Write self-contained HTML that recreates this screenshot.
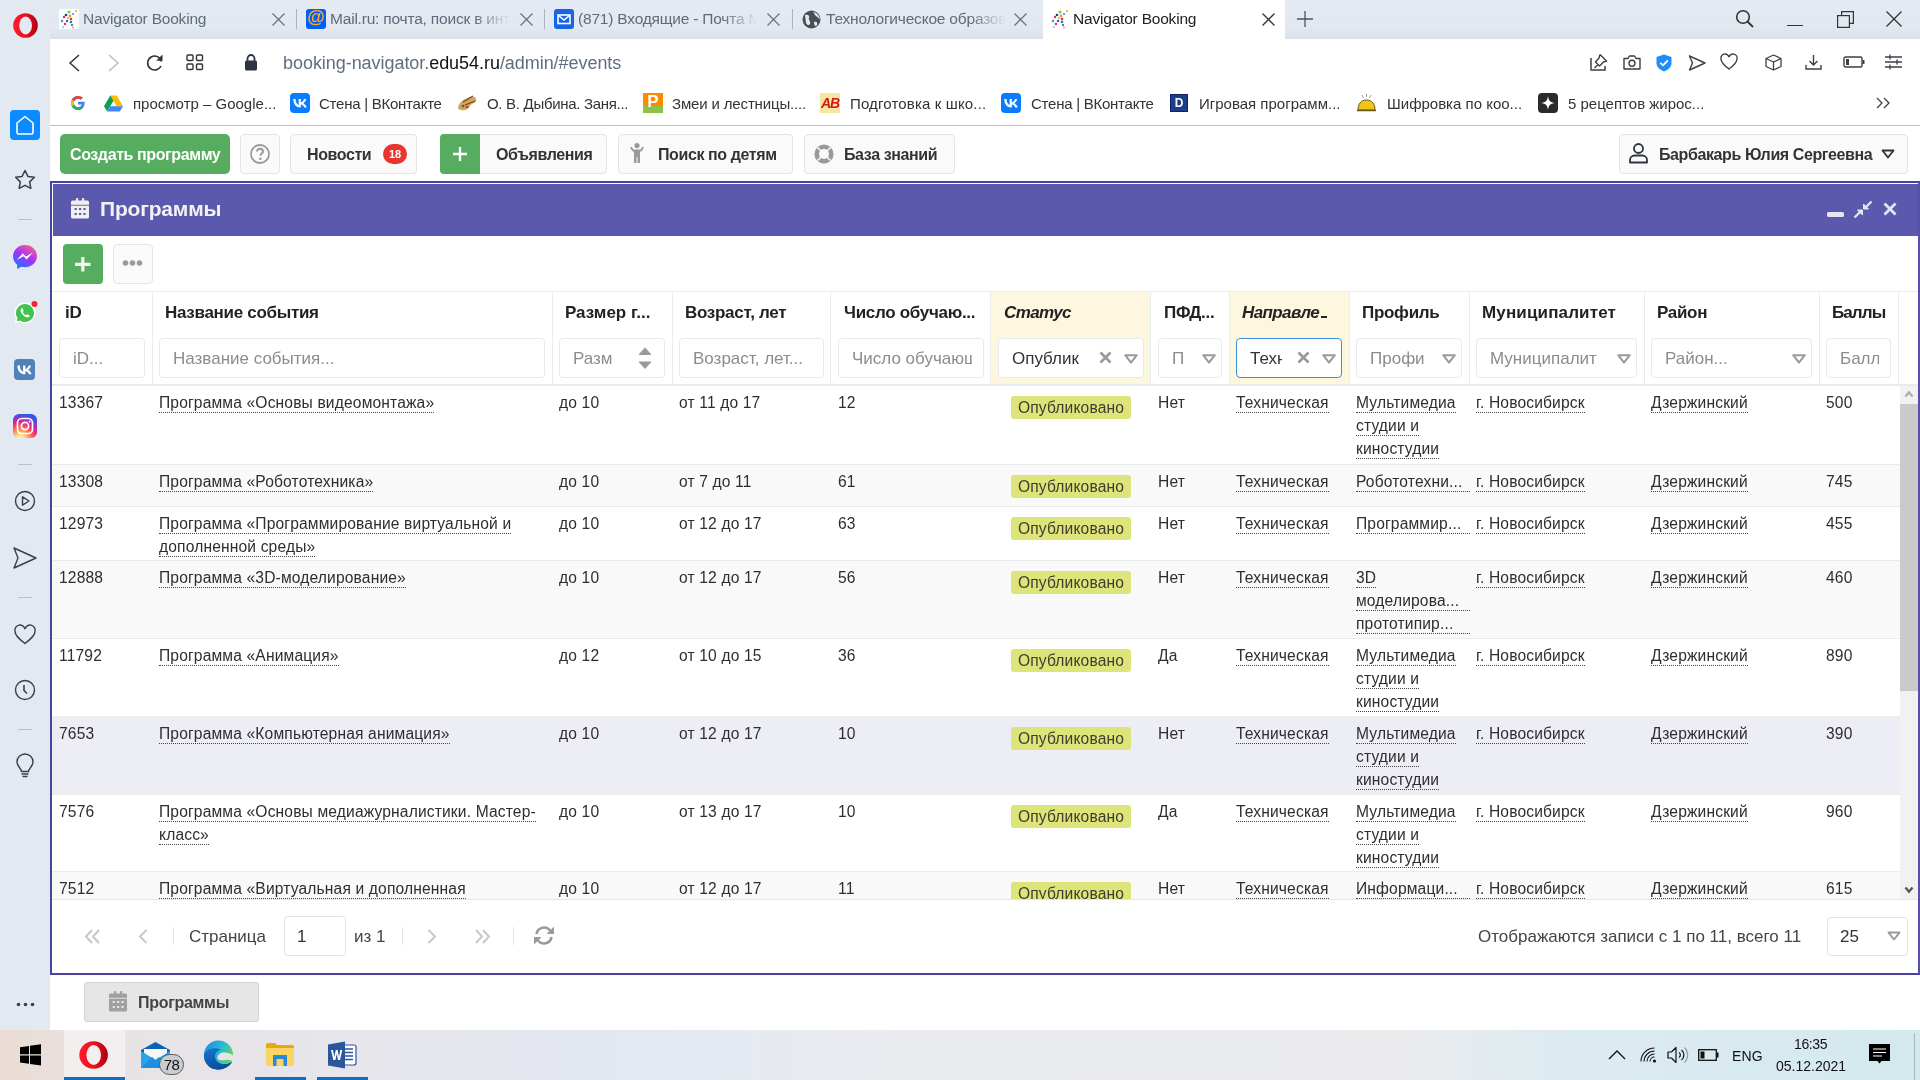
<!DOCTYPE html>
<html><head><meta charset="utf-8">
<style>
*{box-sizing:border-box;margin:0;padding:0}
html,body{width:1920px;height:1080px;overflow:hidden;background:#fff;font-family:"Liberation Sans",sans-serif;color:#333}
.a{position:absolute}
#root{position:absolute;left:0;top:0;width:1920px;height:1080px;will-change:transform}
svg.a{overflow:visible}
.btn{position:absolute;top:134px;height:40px;border:1px solid #e4e4e4;border-radius:4px;background:#fafafa;font-size:16px;font-weight:bold;color:#333;white-space:nowrap}
.btn span{position:absolute;top:11px;letter-spacing:-0.4px}
.ht{position:absolute;left:13px;top:11px;font-size:17px;font-weight:bold;letter-spacing:-0.3px;color:#222;white-space:nowrap}
.inp{position:absolute;left:7px;top:46px;height:40px;border:1px solid #e6e9ed;border-radius:4px;background:#fff;overflow:hidden}
.inp .ph{position:absolute;left:13px;top:10px;font-size:17px;color:#8c8c8c;white-space:nowrap}
.c{position:absolute;font-size:15.6px;line-height:19px;letter-spacing:0.15px;color:#2e2e2e;white-space:nowrap}
.lnk{border-bottom:1px dotted #444}
.badge{position:absolute;top:10px;width:120px;height:23px;background:#dde57a;border-radius:3px;font-size:15.6px;letter-spacing:0.15px;color:#3d3d30;line-height:24px;text-align:center}
.tab{position:absolute;top:0;height:39px;font-size:15.5px;letter-spacing:-0.2px;color:#5f6b7a;white-space:nowrap}
.bm{position:absolute;top:95px;font-size:15px;color:#333;white-space:nowrap}
.fade{-webkit-mask-image:linear-gradient(90deg,#000 80%,transparent 100%)}
</style></head><body><div id="root">
<!-- tab bar -->
<div class="a" style="left:0;top:0;width:1920px;height:39px;background:linear-gradient(#e5ebf3 0%,#e2e8f0 70%,#dae1ea 100%)"></div>
<div class="a" style="left:0;top:0;width:50px;height:39px;background:#e3e9f1"></div>
<!-- sidebar -->
<div class="a" style="left:0;top:39px;width:50px;height:991px;background:#e2e9f1"></div>
<!-- address area -->
<div class="a" style="left:50px;top:39px;width:1870px;height:87px;background:#fff;border-bottom:1px solid #b6c1cd"></div>
<!-- app -->
<div class="a" style="left:50px;top:126px;width:1870px;height:904px;background:#fff"></div>

<!-- ===== Opera tab bar ===== -->
<svg class="a" style="left:13px;top:13px" width="25" height="25" viewBox="0 0 25 25"><defs><linearGradient id="og" x1="0" y1="0" x2="1" y2="0"><stop offset="0" stop-color="#ff1b2d"/><stop offset="0.55" stop-color="#e8101f"/><stop offset="1" stop-color="#a70014"/></linearGradient></defs><ellipse cx="12.5" cy="12.5" rx="12.3" ry="12.3" fill="url(#og)"/><ellipse cx="12.6" cy="12.5" rx="6.4" ry="9" fill="#e3e9f1"/></svg>
<!-- tab 1 -->
<div class="a fav" style="left:59px;top:9px;width:20px;height:20px;background:#fff"></div>
<svg class="a" style="left:59px;top:9px" width="20" height="20" viewBox="0 0 20 20"><circle cx="10" cy="3" r="1.6" fill="#8bc34a"/><circle cx="7" cy="6" r="1.3" fill="#1e3a8a"/><circle cx="11" cy="7" r="1.4" fill="#ff9800"/><circle cx="5" cy="8" r="1.2" fill="#e91e63"/><circle cx="14" cy="5" r="1.1" fill="#2196f3"/><circle cx="17" cy="2" r="1" fill="#ff9800"/><circle cx="12" cy="10" r="1.3" fill="#e91e63"/><circle cx="3" cy="12" r="1.2" fill="#2196f3"/><circle cx="8" cy="12" r="1.2" fill="#3f51b5"/><circle cx="12" cy="13" r="1.3" fill="#009688"/><circle cx="6" cy="15" r="1.2" fill="#e91e63"/><circle cx="13" cy="16" r="1.1" fill="#3f51b5"/><circle cx="4" cy="18" r="1" fill="#80cbc4"/><circle cx="14" cy="18.5" r="1" fill="#f48fb1"/><circle cx="9" cy="9" r="1" fill="#8bc34a"/></svg>
<div class="tab" style="left:83px;top:10px">Navigator Booking</div>
<svg class="a" style="left:272px;top:13px" width="13" height="13" viewBox="0 0 13 13"><path d="M0.5 0.5L12.5 12.5M12.5 0.5L0.5 12.5" stroke="#6b7480" stroke-width="1.3"/></svg>
<div class="a" style="left:296px;top:9px;width:1px;height:20px;background:#aab4c0"></div>
<!-- tab 2 -->
<div class="a" style="left:306px;top:9px;width:20px;height:20px;background:#005ff9;border-radius:3px"></div>
<div class="a" style="left:306px;top:6px;width:20px;text-align:center;font-size:18px;font-weight:bold;color:#ffa930;line-height:22px">@</div>
<div class="tab fade" style="left:330px;top:10px;width:180px;overflow:hidden">Mail.ru: почта, поиск в инт</div>
<svg class="a" style="left:520px;top:13px" width="13" height="13" viewBox="0 0 13 13"><path d="M0.5 0.5L12.5 12.5M12.5 0.5L0.5 12.5" stroke="#6b7480" stroke-width="1.3"/></svg>
<div class="a" style="left:544px;top:9px;width:1px;height:20px;background:#aab4c0"></div>
<!-- tab 3 -->
<div class="a" style="left:554px;top:9px;width:20px;height:20px;background:#1565e8;border-radius:3px"></div>
<svg class="a" style="left:554px;top:9px" width="20" height="20" viewBox="0 0 20 20"><rect x="4" y="6" width="12" height="8.5" fill="none" stroke="#fff" stroke-width="1.6"/><path d="M4.5 6.5 L10 11 L15.5 6.5" fill="none" stroke="#fff" stroke-width="1.6"/></svg>
<div class="tab fade" style="left:578px;top:10px;width:180px;overflow:hidden">(871) Входящие - Почта M</div>
<svg class="a" style="left:767px;top:13px" width="13" height="13" viewBox="0 0 13 13"><path d="M0.5 0.5L12.5 12.5M12.5 0.5L0.5 12.5" stroke="#6b7480" stroke-width="1.3"/></svg>
<div class="a" style="left:792px;top:9px;width:1px;height:20px;background:#aab4c0"></div>
<!-- tab 4 -->
<svg class="a" style="left:802px;top:10px" width="19" height="19" viewBox="0 0 19 19"><circle cx="9.5" cy="9.5" r="9" fill="#4a4f55"/><path d="M3 5 C6 4 8 6 7 8 C6 10 9 11 8 14 C7 16 5 15 4 13 Z M11 2 C13 3 12 5 14 6 C16 7 17 9 18 9 C17 5 14 2 11 2Z M12 12 C14 11 16 12 15 15 C14 17 12 16 12 12Z" fill="#e3e9f1"/></svg>
<div class="tab fade" style="left:826px;top:10px;width:180px;overflow:hidden">Технологическое образов</div>
<svg class="a" style="left:1014px;top:13px" width="13" height="13" viewBox="0 0 13 13"><path d="M0.5 0.5L12.5 12.5M12.5 0.5L0.5 12.5" stroke="#6b7480" stroke-width="1.3"/></svg>
<!-- active tab -->
<div class="a" style="left:1043px;top:0;width:242px;height:39px;background:#fff"></div>
<svg class="a" style="left:1050px;top:9px" width="20" height="20" viewBox="0 0 20 20"><circle cx="10" cy="3" r="1.6" fill="#8bc34a"/><circle cx="7" cy="6" r="1.3" fill="#1e3a8a"/><circle cx="11" cy="7" r="1.4" fill="#ff9800"/><circle cx="5" cy="8" r="1.2" fill="#e91e63"/><circle cx="14" cy="5" r="1.1" fill="#2196f3"/><circle cx="17" cy="2" r="1" fill="#ff9800"/><circle cx="12" cy="10" r="1.3" fill="#e91e63"/><circle cx="3" cy="12" r="1.2" fill="#2196f3"/><circle cx="8" cy="12" r="1.2" fill="#3f51b5"/><circle cx="12" cy="13" r="1.3" fill="#009688"/><circle cx="6" cy="15" r="1.2" fill="#e91e63"/><circle cx="13" cy="16" r="1.1" fill="#3f51b5"/><circle cx="4" cy="18" r="1" fill="#80cbc4"/><circle cx="14" cy="18.5" r="1" fill="#f48fb1"/><circle cx="9" cy="9" r="1" fill="#8bc34a"/></svg>
<div class="tab" style="left:1073px;top:10px;color:#222">Navigator Booking</div>
<svg class="a" style="left:1262px;top:13px" width="13" height="13" viewBox="0 0 13 13"><path d="M0.5 0.5L12.5 12.5M12.5 0.5L0.5 12.5" stroke="#333" stroke-width="1.3"/></svg>
<svg class="a" style="left:1297px;top:11px" width="16" height="16" viewBox="0 0 16 16"><path d="M8 0V16M0 8H16" stroke="#4a5360" stroke-width="1.3"/></svg>
<!-- window controls -->
<svg class="a" style="left:1735px;top:9px" width="20" height="20" viewBox="0 0 20 20"><circle cx="8" cy="8" r="6.3" fill="none" stroke="#333" stroke-width="1.6"/><path d="M12.5 12.5L18 18" stroke="#333" stroke-width="1.8"/></svg>
<div class="a" style="left:1787px;top:25px;width:16px;height:1px;background:#333"></div>
<svg class="a" style="left:1837px;top:11px" width="17" height="17" viewBox="0 0 17 17"><rect x="0.6" y="4.6" width="11.8" height="11.8" fill="none" stroke="#333" stroke-width="1.2"/><path d="M4.6 4.6V0.6H16.4V12.4H12.4" fill="none" stroke="#333" stroke-width="1.2"/></svg>
<svg class="a" style="left:1886px;top:11px" width="16" height="16" viewBox="0 0 16 16"><path d="M0.5 0.5L15.5 15.5M15.5 0.5L0.5 15.5" stroke="#333" stroke-width="1.3"/></svg>

<!-- ===== address bar ===== -->
<svg class="a" style="left:67px;top:54px" width="14" height="18" viewBox="0 0 14 18"><path d="M12 1L3 9L12 17" fill="none" stroke="#333" stroke-width="1.5"/></svg>
<svg class="a" style="left:107px;top:54px" width="14" height="18" viewBox="0 0 14 18"><path d="M2 1L11 9L2 17" fill="none" stroke="#b8bec6" stroke-width="1.5"/></svg>
<svg class="a" style="left:145px;top:53px" width="20" height="20" viewBox="0 0 20 20"><path d="M16.5 8.5 A7 7 0 1 0 16 13" fill="none" stroke="#333" stroke-width="1.6"/><path d="M17.5 1.5 V7.8 H11.2 Z" fill="#333"/></svg>
<svg class="a" style="left:186px;top:54px" width="18" height="17" viewBox="0 0 18 17"><rect x="1" y="1" width="6" height="5.5" rx="1" fill="none" stroke="#333" stroke-width="1.4"/><rect x="10.5" y="1" width="6" height="5.5" rx="1" fill="none" stroke="#333" stroke-width="1.4"/><rect x="1" y="10" width="6" height="5.5" rx="1" fill="none" stroke="#333" stroke-width="1.4"/><rect x="10.5" y="10" width="6" height="5.5" rx="1" fill="none" stroke="#333" stroke-width="1.4"/></svg>
<svg class="a" style="left:244px;top:53px" width="14" height="18" viewBox="0 0 14 18"><path d="M3.5 8V5.5A3.5 3.5 0 0 1 10.5 5.5V8" fill="none" stroke="#2d3440" stroke-width="1.8"/><rect x="1" y="7.5" width="12" height="10" rx="1.5" fill="#2d3440"/></svg>
<div class="a" style="left:283px;top:53px;font-size:18px;color:#5f6e81;white-space:nowrap;letter-spacing:-0.05px">booking-navigator.<span style="color:#111">edu54.ru</span>/admin/#events</div>
<!-- right address icons -->
<svg class="a" style="left:1590px;top:53px" width="18" height="18" viewBox="0 0 18 18"><path d="M1 5V17H15V13" fill="none" stroke="#3b4048" stroke-width="1.5"/><path d="M10 1.5L16.5 8L13.5 9L9.5 13L8 11.5L4.5 15M8 11.5L5.5 9L9 5L10 1.5" fill="none" stroke="#3b4048" stroke-width="1.4" stroke-linejoin="round"/></svg>
<svg class="a" style="left:1623px;top:54px" width="18" height="16" viewBox="0 0 18 16"><path d="M1 4.5H5L6.5 2H11.5L13 4.5H17V15H1Z" fill="none" stroke="#3b4048" stroke-width="1.4" stroke-linejoin="round"/><circle cx="9" cy="9.3" r="3" fill="none" stroke="#3b4048" stroke-width="1.4"/></svg>
<svg class="a" style="left:1656px;top:54px" width="16" height="18" viewBox="0 0 16 18"><path d="M8 0.5L15.5 3V9C15.5 13 12 16 8 17.5C4 16 0.5 13 0.5 9V3Z" fill="#1e8dfa"/><path d="M4.3 8.8L7 11.3L11.8 6.5" fill="none" stroke="#fff" stroke-width="1.8"/></svg>
<svg class="a" style="left:1688px;top:55px" width="18" height="16" viewBox="0 0 18 16"><path d="M1.5 1L17 8L1.5 15L4.5 8Z" fill="none" stroke="#3b4048" stroke-width="1.4" stroke-linejoin="round"/></svg>
<svg class="a" style="left:1720px;top:54px" width="18" height="16" viewBox="0 0 18 16"><path d="M9 15C3 10.5 1 8 1 5A4 4 0 0 1 9 3.2A4 4 0 0 1 17 5C17 8 15 10.5 9 15Z" fill="none" stroke="#3b4048" stroke-width="1.4"/></svg>
<svg class="a" style="left:1765px;top:54px" width="17" height="17" viewBox="0 0 17 17"><path d="M8.5 1L16 4.5V12.5L8.5 16L1 12.5V4.5Z M1 4.5L8.5 8L16 4.5 M8.5 8V16" fill="none" stroke="#3b4048" stroke-width="1.3" stroke-linejoin="round"/></svg>
<svg class="a" style="left:1805px;top:54px" width="17" height="16" viewBox="0 0 17 16"><path d="M8.5 1V11M4.5 7L8.5 11L12.5 7M1 11V15H16V11" fill="none" stroke="#3b4048" stroke-width="1.4"/></svg>
<svg class="a" style="left:1843px;top:56px" width="22" height="12" viewBox="0 0 22 12"><rect x="1" y="1" width="18" height="10" rx="1.5" fill="none" stroke="#3b4048" stroke-width="1.4"/><rect x="3" y="3" width="3" height="6" fill="#3b4048"/><rect x="19.5" y="4" width="2" height="4" fill="#3b4048"/></svg>
<svg class="a" style="left:1885px;top:54px" width="17" height="16" viewBox="0 0 17 16"><path d="M0 3H17M0 8H17M0 13H17M5 0.5V5.5M12 5.5V10.5M5 10.5V15.5" fill="none" stroke="#3b4048" stroke-width="1.3"/></svg>

<!-- ===== bookmarks ===== -->
<svg class="a" style="left:70px;top:95px" width="16" height="16" viewBox="0 0 48 48"><path d="M43.6 20H24v8.5h11.3C34.2 33.5 29.8 36.5 24 36.5c-6.9 0-12.5-5.6-12.5-12.5S17.1 11.5 24 11.5c3.1 0 5.9 1.1 8.1 3l6.1-6.1C34.5 5.1 29.5 3 24 3 12.4 3 3 12.4 3 24s9.4 21 21 21c10.5 0 20-7.6 20-21 0-1.3-.1-2.7-.4-4z" fill="#4285f4"/><path d="M5.4 14.2l7 5.1C14.3 14.8 18.8 11.5 24 11.5c3.1 0 5.9 1.1 8.1 3l6.1-6.1C34.5 5.1 29.5 3 24 3 16 3 9 7.6 5.4 14.2z" fill="#ea4335"/><path d="M24 45c5.4 0 10.3-1.8 14-5l-6.6-5.5c-2 1.4-4.6 2-7.4 2-5.8 0-10.2-3-11.4-8l-7 5.4C9 39.5 15.9 45 24 45z" fill="#34a853"/><path d="M5.4 14.2C4 17.2 3 20.5 3 24s1 6.8 2.6 9.9l7-5.4c-.4-1.4-.6-2.9-.6-4.5s.2-3.1.6-4.5z" fill="#fbbc05"/></svg>
<svg class="a" style="left:104px;top:95px" width="19" height="17" viewBox="0 0 19 17"><path d="M6.3 0.5H12.7L19 11.3H12.5Z" fill="#fbbc04"/><path d="M6.3 0.5L0 11.3L3.2 16.5L9.5 5.8Z" fill="#0f9d58"/><path d="M3.2 16.5H15.8L19 11.3H6.4Z" fill="#4285f4"/></svg>
<div class="bm" style="left:133px">просмотр – Google...</div>
<div class="a" style="left:290px;top:93px;width:20px;height:20px;border-radius:4px;background:#0a7cff"></div>
<svg class="a" style="left:290px;top:93px" width="20" height="20" viewBox="0 0 24 24"><path d="M12.8 17.5c-5.6 0-8.8-3.8-8.9-10.2h2.8c.1 4.7 2.1 6.6 3.7 7V7.3h2.6v4c1.6-.2 3.3-2 3.8-4h2.6c-.4 2.5-2.2 4.3-3.5 5 1.3.6 3.4 2.2 4.2 5.2h-2.9c-.6-1.9-2.1-3.4-4.2-3.6v3.6h-.2z" fill="#fff"/></svg>
<div class="bm" style="left:319px;letter-spacing:-0.25px">Стена | ВКонтакте</div>
<svg class="a" style="left:457px;top:95px" width="21" height="17" viewBox="0 0 21 17"><path d="M1 12C3 6 8 3 14 2C18 1.5 20 3 19 6C18 9 14 8 13 11C12 14 8 16 4 15C2 14.5 0.5 13.5 1 12Z" fill="#d9a45a"/><path d="M6 7L16 1M8 10L18 6" stroke="#6b4a2a" stroke-width="1.2"/><circle cx="6" cy="11" r="1.5" fill="#3a7d44"/><circle cx="10" cy="12" r="1.3" fill="#c0392b"/></svg>
<div class="bm" style="left:487px;letter-spacing:-0.3px">О. В. Дыбина. Заня...</div>
<div class="a" style="left:643px;top:93px;width:20px;height:20px;background:#ff8a00"></div>
<div class="a" style="left:643px;top:106px;width:20px;height:7px;background:#8bc34a"></div>
<div class="a" style="left:643px;top:91px;width:20px;font-size:17px;font-weight:bold;color:#fff;text-align:center;line-height:22px">P</div>
<div class="bm" style="left:672px;letter-spacing:-0.15px">Змеи и лестницы....</div>
<div class="a" style="left:820px;top:93px;width:20px;height:20px;background:#f5e6a0"></div>
<div class="a" style="left:818px;top:92px;width:24px;font-size:14px;font-weight:bold;font-style:italic;color:#d01818;text-align:center;line-height:22px;letter-spacing:-1px">AB</div>
<div class="bm" style="left:850px;letter-spacing:0.15px">Подготовка к шко...</div>
<div class="a" style="left:1001px;top:93px;width:20px;height:20px;border-radius:4px;background:#0a7cff"></div>
<svg class="a" style="left:1001px;top:93px" width="20" height="20" viewBox="0 0 24 24"><path d="M12.8 17.5c-5.6 0-8.8-3.8-8.9-10.2h2.8c.1 4.7 2.1 6.6 3.7 7V7.3h2.6v4c1.6-.2 3.3-2 3.8-4h2.6c-.4 2.5-2.2 4.3-3.5 5 1.3.6 3.4 2.2 4.2 5.2h-2.9c-.6-1.9-2.1-3.4-4.2-3.6v3.6h-.2z" fill="#fff"/></svg>
<div class="bm" style="left:1031px;letter-spacing:-0.25px">Стена | ВКонтакте</div>
<div class="a" style="left:1170px;top:94px;width:18px;height:18px;background:#1d3f8a;border:1px solid #0b2466"></div>
<div class="a" style="left:1170px;top:94px;width:18px;font-size:12px;font-weight:bold;color:#fff;text-align:center;line-height:18px">D</div>
<div class="bm" style="left:1199px">Игровая программ...</div>
<svg class="a" style="left:1356px;top:92px" width="21" height="20" viewBox="0 0 21 20"><path d="M2 18H19C19 12 16 8 10.5 8C5 8 2 12 2 18Z" fill="#f2c318" stroke="#6b5a10" stroke-width="1"/><path d="M1 18.5H20" stroke="#6b5a10" stroke-width="1.5"/><path d="M10.5 2V5M6 3L7.5 6M15 3L13.5 6" stroke="#888" stroke-width="0.8"/></svg>
<div class="bm" style="left:1387px">Шифровка по коо...</div>
<div class="a" style="left:1538px;top:93px;width:20px;height:20px;border-radius:4px;background:#2b2b2b"></div>
<svg class="a" style="left:1538px;top:93px" width="20" height="20" viewBox="0 0 20 20"><path d="M10 3C10.8 8 12 9.2 17 10C12 10.8 10.8 12 10 17C9.2 12 8 10.8 3 10C8 9.2 9.2 8 10 3Z" fill="#fff"/></svg>
<div class="bm" style="left:1568px">5 рецептов жирос...</div>
<svg class="a" style="left:1876px;top:97px" width="15" height="12" viewBox="0 0 15 12"><path d="M1 1L6 6L1 11M8 1L13 6L8 11" fill="none" stroke="#3b4048" stroke-width="1.3"/></svg>

<!-- ===== sidebar ===== -->
<div class="a" style="left:10px;top:110px;width:30px;height:30px;border-radius:4px;background:#0a8bff"></div>
<svg class="a" style="left:10px;top:110px" width="30" height="30" viewBox="0 0 30 30"><path d="M7 13L15 6.5L23 13V22.5C23 23.3 22.3 24 21.5 24H8.5C7.7 24 7 23.3 7 22.5Z" fill="none" stroke="#fff" stroke-width="1.6" stroke-linejoin="round"/></svg>
<svg class="a" style="left:13px;top:168px" width="24" height="24" viewBox="0 0 24 24"><path d="M12 2.5L14.9 8.4L21.4 9.3L16.7 13.9L17.8 20.4L12 17.3L6.2 20.4L7.3 13.9L2.6 9.3L9.1 8.4Z" fill="none" stroke="#3b4048" stroke-width="1.5" stroke-linejoin="round"/></svg>
<div class="a" style="left:18px;top:219px;width:14px;height:1px;background:#b9c1cc"></div>
<svg class="a" style="left:12px;top:244px" width="26" height="26" viewBox="0 0 26 26"><defs><linearGradient id="mg" x1="0.2" y1="1" x2="0.8" y2="0"><stop offset="0" stop-color="#0b7dff"/><stop offset="0.5" stop-color="#a033ff"/><stop offset="1" stop-color="#ff5c87"/></linearGradient></defs><path d="M13 1C6.4 1 1 5.9 1 12.3C1 15.8 2.6 18.8 5.2 20.8V25L9.2 22.8C10.4 23.1 11.7 23.3 13 23.3C19.6 23.3 25 18.4 25 12.1C25 5.8 19.6 1 13 1Z" fill="url(#mg)"/><path d="M4.8 16L10.8 9.3L13.9 12.4L20.8 8.6L14.6 15.4L11.6 12.3Z" fill="#fff"/></svg>
<svg class="a" style="left:12px;top:300px" width="28" height="28" viewBox="0 0 28 28"><path d="M13 2.5C7.2 2.5 2.5 7.2 2.5 13C2.5 15 3.1 16.9 4.1 18.5L2.8 23.2L7.6 21.9C9.2 22.9 11 23.5 13 23.5C18.8 23.5 23.5 18.8 23.5 13C23.5 7.2 18.8 2.5 13 2.5Z" fill="#fff"/><path d="M13 4C8 4 4 8 4 13C4 14.9 4.6 16.6 5.6 18L4.8 21.3L8.1 20.4C9.5 21.4 11.2 22 13 22C18 22 22 18 22 13C22 8 18 4 13 4Z" fill="#40c351"/><path d="M9.5 8.5C9.8 8.2 10.5 8.2 10.7 8.6L11.6 10.6C11.7 10.9 11.6 11.2 11.4 11.4L10.8 12C11.4 13.4 12.6 14.6 14 15.2L14.6 14.6C14.8 14.4 15.1 14.3 15.4 14.4L17.4 15.3C17.8 15.5 17.8 16.2 17.5 16.5C16.8 17.3 15.8 17.6 14.8 17.3C11.8 16.4 9.6 14.2 8.7 11.2C8.4 10.2 8.7 9.2 9.5 8.5Z" fill="#fff"/><circle cx="22.5" cy="4" r="3" fill="#f0292e"/></svg>
<div class="a" style="left:14px;top:359px;width:21px;height:21px;border-radius:4px;background:#5181b8"></div>
<svg class="a" style="left:14px;top:359px" width="21" height="21" viewBox="0 0 24 24"><path d="M12.8 17.5c-5.6 0-8.8-3.8-8.9-10.2h2.8c.1 4.7 2.1 6.6 3.7 7V7.3h2.6v4c1.6-.2 3.3-2 3.8-4h2.6c-.4 2.5-2.2 4.3-3.5 5 1.3.6 3.4 2.2 4.2 5.2h-2.9c-.6-1.9-2.1-3.4-4.2-3.6v3.6h-.2z" fill="#fff"/></svg>
<svg class="a" style="left:13px;top:414px" width="24" height="24" viewBox="0 0 24 24"><defs><radialGradient id="ig" cx="0.3" cy="1.05" r="1.2"><stop offset="0" stop-color="#fdf497"/><stop offset="0.1" stop-color="#fdf497"/><stop offset="0.45" stop-color="#fd5949"/><stop offset="0.6" stop-color="#d6249f"/><stop offset="0.9" stop-color="#285AEB"/></radialGradient></defs><rect x="0" y="0" width="24" height="24" rx="6" fill="url(#ig)"/><rect x="4.5" y="4.5" width="15" height="15" rx="4.3" fill="none" stroke="#fff" stroke-width="1.7"/><circle cx="12" cy="12" r="3.6" fill="none" stroke="#fff" stroke-width="1.7"/><circle cx="16.6" cy="7.4" r="1" fill="#fff"/></svg>
<div class="a" style="left:18px;top:464px;width:14px;height:1px;background:#b9c1cc"></div>
<svg class="a" style="left:14px;top:490px" width="22" height="22" viewBox="0 0 22 22"><circle cx="11" cy="11" r="9.5" fill="none" stroke="#3b4048" stroke-width="1.4"/><path d="M8.5 6.8V15.2L15 11Z" fill="none" stroke="#3b4048" stroke-width="1.4" stroke-linejoin="round"/></svg>
<svg class="a" style="left:13px;top:547px" width="24" height="22" viewBox="0 0 24 22"><path d="M1 1L23 11L1 21L5 11Z" fill="none" stroke="#3b4048" stroke-width="1.4" stroke-linejoin="round"/></svg>
<div class="a" style="left:18px;top:597px;width:14px;height:1px;background:#b9c1cc"></div>
<svg class="a" style="left:14px;top:625px" width="22" height="20" viewBox="0 0 22 20"><path d="M11 18.5C4 13 1 10 1 6.2A5 5 0 0 1 11 4A5 5 0 0 1 21 6.2C21 10 18 13 11 18.5Z" fill="none" stroke="#3b4048" stroke-width="1.4"/></svg>
<svg class="a" style="left:14px;top:679px" width="22" height="22" viewBox="0 0 22 22"><circle cx="11" cy="11" r="9.5" fill="none" stroke="#3b4048" stroke-width="1.4"/><path d="M10 6V11.5L13 14.5" fill="none" stroke="#3b4048" stroke-width="1.6"/></svg>
<div class="a" style="left:18px;top:729px;width:14px;height:1px;background:#b9c1cc"></div>
<svg class="a" style="left:15px;top:753px" width="20" height="26" viewBox="0 0 20 26"><path d="M6.5 18.5C6.5 15.5 2 13.5 2 9A8 8 0 0 1 18 9C18 13.5 13.5 15.5 13.5 18.5Z" fill="none" stroke="#3b4048" stroke-width="1.4"/><path d="M6.5 21H13.5M7.5 23.5H12.5" stroke="#3b4048" stroke-width="1.4"/></svg>
<svg class="a" style="left:16px;top:1002px" width="19" height="5" viewBox="0 0 19 5"><circle cx="2.5" cy="2.5" r="1.8" fill="#3b4048"/><circle cx="9.5" cy="2.5" r="1.8" fill="#3b4048"/><circle cx="16.5" cy="2.5" r="1.8" fill="#3b4048"/></svg>

<!-- toolbar buttons -->
<div class="a" style="left:60px;top:134px;width:170px;height:40px;background:#57ad5f;border-radius:5px"></div>
<div class="a" style="left:70px;top:146px;font-size:16px;font-weight:bold;color:#fff;white-space:nowrap;letter-spacing:-0.4px">Создать программу</div>
<div class="btn" style="left:240px;width:40px"></div>
<svg class="a" style="left:250px;top:144px" width="20" height="20" viewBox="0 0 20 20"><circle cx="10" cy="10" r="9" fill="none" stroke="#9a9a9a" stroke-width="1.8"/><path d="M7 7.6C7 5.8 8.3 4.8 10 4.8C11.8 4.8 13 5.9 13 7.4C13 9.4 10.3 9.6 10.3 11.8" fill="none" stroke="#9a9a9a" stroke-width="2"/><circle cx="10.3" cy="14.8" r="1.3" fill="#9a9a9a"/></svg>
<div class="btn" style="left:290px;width:127px"><span style="left:16px">Новости</span></div>
<div class="a" style="left:383px;top:144px;width:24px;height:20px;border-radius:10px;background:#e8352e;color:#fff;font-size:11px;font-weight:bold;text-align:center;line-height:20px">18</div>
<div class="btn" style="left:440px;width:167px"><span style="left:55px">Объявления</span></div>
<div class="a" style="left:440px;top:134px;width:40px;height:40px;background:#57ad5f;border-radius:4px 0 0 4px"></div>
<svg class="a" style="left:453px;top:147px" width="14" height="14" viewBox="0 0 14 14"><path d="M7 0V14M0 7H14" stroke="#fff" stroke-width="2.4"/></svg>
<div class="btn" style="left:618px;width:175px"><span style="left:39px">Поиск по детям</span></div>
<svg class="a" style="left:629px;top:143px" width="16" height="21" viewBox="0 0 16 21"><circle cx="8" cy="2.6" r="2.6" fill="#9a9a9a"/><path d="M1 4.5L3.5 8.5H5V20H7.5V14H8.5V20H11V8.5H12.5L15 4.5L13.5 3.8L11.5 6.5H4.5L2.5 3.8Z" fill="#9a9a9a"/></svg>
<div class="btn" style="left:804px;width:151px"><span style="left:39px">База знаний</span></div>
<svg class="a" style="left:814px;top:144px" width="20" height="20" viewBox="0 0 20 20"><circle cx="10" cy="10" r="7.3" fill="none" stroke="#9a9a9a" stroke-width="4.6"/><path d="M3.5 3.5L7 7M16.5 3.5L13 7M3.5 16.5L7 13M16.5 16.5L13 13" stroke="#fafafa" stroke-width="1.6"/></svg>
<div class="btn" style="left:1619px;width:289px"><span style="left:39px">Барбакарь Юлия Сергеевна</span></div>
<svg class="a" style="left:1629px;top:143px" width="19" height="21" viewBox="0 0 19 21"><circle cx="9.5" cy="5.5" r="4.5" fill="none" stroke="#2c3440" stroke-width="1.8"/><path d="M1 19.5V17C1 14.5 3 12.5 5.5 12.5H13.5C16 12.5 18 14.5 18 17V19.5Z" fill="none" stroke="#2c3440" stroke-width="1.8" stroke-linejoin="round"/></svg>
<svg class="a" style="left:1881px;top:149px" width="14" height="10" viewBox="0 0 14 10"><path d="M1.5 1.5H12.5L7 8.5Z" fill="none" stroke="#2c3440" stroke-width="1.8" stroke-linejoin="round"/></svg>

<!-- window -->
<div class="a" style="left:50px;top:181px;width:1870px;height:794px;border:2px solid #4843a3;border-right-color:#5551ab"></div>
<div class="a" style="left:53px;top:184px;width:1865px;height:52px;background:#5b59ad"></div>
<div class="a" style="left:100px;top:197px;font-size:21px;font-weight:bold;color:#f2f2f2;white-space:nowrap;letter-spacing:-0.2px">Программы</div>
<svg class="a" style="left:71px;top:198px" width="18" height="21" viewBox="0 0 18 21"><rect x="5" y="0" width="2.2" height="4" rx="0.8" fill="#f0f0f0"/><rect x="11" y="0" width="2.2" height="4" rx="0.8" fill="#f0f0f0"/><rect x="0" y="2.5" width="18" height="18" rx="1.6" fill="#f0f0f0"/><rect x="0" y="6.8" width="18" height="0.9" fill="#5b59ad"/><rect x="3.6" y="10" width="2.2" height="2" fill="#5b59ad"/><rect x="8" y="10" width="2.2" height="2" fill="#5b59ad"/><rect x="12.4" y="10" width="2.2" height="2" fill="#5b59ad"/><rect x="3.6" y="15" width="2.2" height="2" fill="#5b59ad"/><rect x="8" y="15" width="2.2" height="2" fill="#5b59ad"/><rect x="12.4" y="15" width="2.2" height="2" fill="#5b59ad"/></svg>
<div class="a" style="left:1827px;top:212px;width:17px;height:5px;background:#e6e6f2;border-radius:1.5px"></div>
<svg class="a" style="left:1853px;top:200px" width="20" height="19" viewBox="0 0 20 19"><path d="M1.5 17.5L7.5 11.5M18.5 1.5L12.5 7.5" stroke="#e6e6f2" stroke-width="2.2"/><path d="M4.5 10H9.5V15Z M15.5 9H10.5V4Z" fill="#e6e6f2" stroke="#e6e6f2" stroke-width="1"/></svg>
<svg class="a" style="left:1883px;top:202px" width="14" height="14" viewBox="0 0 14 14"><path d="M1.5 1.5L12.5 12.5M12.5 1.5L1.5 12.5" stroke="#e6e6f2" stroke-width="2.8"/></svg>
<!-- window toolbar -->
<div class="a" style="left:63px;top:244px;width:40px;height:40px;background:#57ad5f;border-radius:4px"></div>
<div class="a" style="left:113px;top:244px;width:40px;height:40px;background:#fafafa;border:1px solid #e4e4e4;border-radius:4px"></div>
<svg class="a" style="left:75px;top:257px" width="16" height="15" viewBox="0 0 16 15"><path d="M7.8 0V14.5M0 7.3H15.5" stroke="#f4f4f4" stroke-width="3.2"/></svg>
<svg class="a" style="left:122px;top:259px" width="22" height="8" viewBox="0 0 22 8"><circle cx="3.5" cy="4" r="2.8" fill="#9a9a9a"/><circle cx="10.5" cy="4" r="2.8" fill="#9a9a9a"/><circle cx="17.5" cy="4" r="2.8" fill="#9a9a9a"/></svg>

<div class="a" style="left:52px;top:291px;width:1866px;height:1px;background:#e8edf2"></div>
<div class="a" style="left:52px;top:384px;width:1866px;height:2px;background:#e7ebee"></div>
<div class="a" style="left:52px;top:292px;width:100px;height:92px;background:#fff">
<div class="ht" style="">iD</div>
<div class="inp" style="width:86px;border-color:#e6e9ed">
<div class="ph" style="width:60px;overflow:hidden">iD...</div>
</div>
</div>
<div class="a" style="left:152px;top:292px;width:400px;height:92px;background:#fff">
<div class="ht" style="">Название события</div>
<div class="inp" style="width:386px;border-color:#e6e9ed">
<div class="ph" style="width:360px;overflow:hidden">Название события...</div>
</div>
</div>
<div class="a" style="left:552px;top:292px;width:120px;height:92px;background:#fff">
<div class="ht" style="letter-spacing:0px;">Размер г...</div>
<div class="inp" style="width:106px;border-color:#e6e9ed">
<div class="ph" style="width:56px;overflow:hidden">Разм</div>
</div>
<svg class="a" style="left:86px;top:54px" width="14" height="24" viewBox="0 0 14 24"><path d="M1.5 8.3 L7 2.3 L12.5 8.3Z M1.5 16 L7 22 L12.5 16Z" fill="#9a9a9a" stroke="#9a9a9a" stroke-width="1.2" stroke-linejoin="round"/></svg>
</div>
<div class="a" style="left:672px;top:292px;width:159px;height:92px;background:#fff">
<div class="ht" style="">Возраст, лет</div>
<div class="inp" style="width:145px;border-color:#e6e9ed">
<div class="ph" style="width:119px;overflow:hidden">Возраст, лет...</div>
</div>
</div>
<div class="a" style="left:831px;top:292px;width:160px;height:92px;background:#fff">
<div class="ht" style="">Число обучаю...</div>
<div class="inp" style="width:146px;border-color:#e6e9ed">
<div class="ph" style="width:120px;overflow:hidden">Число обучающ</div>
</div>
</div>
<div class="a" style="left:991px;top:292px;width:160px;height:92px;background:#fef7df">
<div class="ht" style="font-style:italic;letter-spacing:-0.6px;">Статус</div>
<div class="inp" style="width:146px;border-color:#e6e9ed">
<div class="ph" style="color:#333;width:72px;overflow:hidden">Опублик</div>
</div>
<svg class="a" style="left:133px;top:62px" width="14" height="10" viewBox="0 0 14 10"><path d="M1.2 1.2 L12.8 1.2 L7 8.6 Z" fill="none" stroke="#9a9a9a" stroke-width="2" stroke-linejoin="round"/></svg>
<svg class="a" style="left:108px;top:59px" width="13" height="13" viewBox="0 0 13 13"><path d="M1.5 1.5 L11.5 11.5 M11.5 1.5 L1.5 11.5" stroke="#999" stroke-width="2.6"/></svg>
</div>
<div class="a" style="left:1151px;top:292px;width:78px;height:92px;background:#fff">
<div class="ht" style="">ПФД...</div>
<div class="inp" style="width:64px;border-color:#e6e9ed">
<div class="ph" style="width:12px;overflow:hidden">П</div>
</div>
<svg class="a" style="left:51px;top:62px" width="14" height="10" viewBox="0 0 14 10"><path d="M1.2 1.2 L12.8 1.2 L7 8.6 Z" fill="none" stroke="#9a9a9a" stroke-width="2" stroke-linejoin="round"/></svg>
</div>
<div class="a" style="left:1229px;top:292px;width:120px;height:92px;background:#fef7df">
<div class="ht" style="font-style:italic;letter-spacing:-0.6px;">Направле</div>
<div class="inp" style="width:106px;border-color:#3a8fd9">
<div class="ph" style="color:#333;width:32px;overflow:hidden">Техн</div>
</div>
<svg class="a" style="left:93px;top:62px" width="14" height="10" viewBox="0 0 14 10"><path d="M1.2 1.2 L12.8 1.2 L7 8.6 Z" fill="none" stroke="#9a9a9a" stroke-width="2" stroke-linejoin="round"/></svg>
<svg class="a" style="left:68px;top:59px" width="13" height="13" viewBox="0 0 13 13"><path d="M1.5 1.5 L11.5 11.5 M11.5 1.5 L1.5 11.5" stroke="#999" stroke-width="2.6"/></svg>
<div class="a" style="left:92px;top:24px;width:6px;height:2px;background:#222"></div>
</div>
<div class="a" style="left:1349px;top:292px;width:120px;height:92px;background:#fff">
<div class="ht" style="">Профиль</div>
<div class="inp" style="width:106px;border-color:#e6e9ed">
<div class="ph" style="width:54px;overflow:hidden">Профи</div>
</div>
<svg class="a" style="left:93px;top:62px" width="14" height="10" viewBox="0 0 14 10"><path d="M1.2 1.2 L12.8 1.2 L7 8.6 Z" fill="none" stroke="#9a9a9a" stroke-width="2" stroke-linejoin="round"/></svg>
</div>
<div class="a" style="left:1469px;top:292px;width:175px;height:92px;background:#fff">
<div class="ht" style="letter-spacing:0.15px;">Муниципалитет</div>
<div class="inp" style="width:161px;border-color:#e6e9ed">
<div class="ph" style="width:109px;overflow:hidden">Муниципалит</div>
</div>
<svg class="a" style="left:148px;top:62px" width="14" height="10" viewBox="0 0 14 10"><path d="M1.2 1.2 L12.8 1.2 L7 8.6 Z" fill="none" stroke="#9a9a9a" stroke-width="2" stroke-linejoin="round"/></svg>
</div>
<div class="a" style="left:1644px;top:292px;width:175px;height:92px;background:#fff">
<div class="ht" style="">Район</div>
<div class="inp" style="width:161px;border-color:#e6e9ed">
<div class="ph" style="width:109px;overflow:hidden">Район...</div>
</div>
<svg class="a" style="left:148px;top:62px" width="14" height="10" viewBox="0 0 14 10"><path d="M1.2 1.2 L12.8 1.2 L7 8.6 Z" fill="none" stroke="#9a9a9a" stroke-width="2" stroke-linejoin="round"/></svg>
</div>
<div class="a" style="left:1819px;top:292px;width:79px;height:92px;background:#fff">
<div class="ht" style="letter-spacing:-0.9px;">Баллы</div>
<div class="inp" style="width:65px;border-color:#e6e9ed">
<div class="ph" style="width:39px;overflow:hidden">Балл</div>
</div>
</div>
<div class="a" style="left:152px;top:292px;width:1px;height:92px;background:#e8edf2"></div>
<div class="a" style="left:552px;top:292px;width:1px;height:92px;background:#e8edf2"></div>
<div class="a" style="left:672px;top:292px;width:1px;height:92px;background:#e8edf2"></div>
<div class="a" style="left:830px;top:292px;width:1px;height:92px;background:#e8edf2"></div>
<div class="a" style="left:990px;top:292px;width:1px;height:92px;background:#e8edf2"></div>
<div class="a" style="left:1150px;top:292px;width:1px;height:92px;background:#e8edf2"></div>
<div class="a" style="left:1229px;top:292px;width:1px;height:92px;background:#e8edf2"></div>
<div class="a" style="left:1349px;top:292px;width:1px;height:92px;background:#e8edf2"></div>
<div class="a" style="left:1469px;top:292px;width:1px;height:92px;background:#e8edf2"></div>
<div class="a" style="left:1644px;top:292px;width:1px;height:92px;background:#e8edf2"></div>
<div class="a" style="left:1819px;top:292px;width:1px;height:92px;background:#e8edf2"></div>
<div class="a" style="left:1898px;top:292px;width:1px;height:92px;background:#e8edf2"></div>
<div class="a" style="left:1899px;top:292px;width:19px;height:92px;background:#fff"></div>
<div class="a" style="left:0;top:386px;width:1900px;height:513px;overflow:hidden">
<div class="a" style="left:52px;top:0px;width:1848px;height:79px;background:#fff;border-bottom:1px solid #ebebeb;overflow:hidden">
<div class="c" style="left:7px;top:6.5px">13367</div>
<div class="c lnk" style="left:107px;top:6.5px;">Программа «Основы видеомонтажа»</div>
<div class="c" style="left:507px;top:6.5px">до 10</div>
<div class="c" style="left:627px;top:6.5px">от 11 до 17</div>
<div class="c" style="left:786px;top:6.5px">12</div>
<div class="badge" style="left:959px">Опубликовано</div>
<div class="c" style="left:1106px;top:6.5px">Нет</div>
<div class="c lnk" style="left:1184px;top:6.5px;">Техническая</div>
<div class="c lnk" style="left:1304px;top:6.5px;">Мультимедиа</div>
<div class="c lnk" style="left:1304px;top:29.5px;">студии и</div>
<div class="c lnk" style="left:1304px;top:52.5px;">киностудии</div>
<div class="c lnk" style="left:1424px;top:6.5px;">г. Новосибирск</div>
<div class="c lnk" style="left:1599px;top:6.5px;">Дзержинский</div>
<div class="c" style="left:1774px;top:6.5px">500</div>
</div>
<div class="a" style="left:52px;top:79px;width:1848px;height:42px;background:#f9f9f9;border-bottom:1px solid #ebebeb;overflow:hidden">
<div class="c" style="left:7px;top:6.5px">13308</div>
<div class="c lnk" style="left:107px;top:6.5px;">Программа «Робототехника»</div>
<div class="c" style="left:507px;top:6.5px">до 10</div>
<div class="c" style="left:627px;top:6.5px">от 7 до 11</div>
<div class="c" style="left:786px;top:6.5px">61</div>
<div class="badge" style="left:959px">Опубликовано</div>
<div class="c" style="left:1106px;top:6.5px">Нет</div>
<div class="c lnk" style="left:1184px;top:6.5px;">Техническая</div>
<div class="c lnk" style="left:1304px;top:6.5px;width:114px;">Робототехни...</div>
<div class="c lnk" style="left:1424px;top:6.5px;">г. Новосибирск</div>
<div class="c lnk" style="left:1599px;top:6.5px;">Дзержинский</div>
<div class="c" style="left:1774px;top:6.5px">745</div>
</div>
<div class="a" style="left:52px;top:121px;width:1848px;height:54px;background:#fff;border-bottom:1px solid #ebebeb;overflow:hidden">
<div class="c" style="left:7px;top:6.5px">12973</div>
<div class="c lnk" style="left:107px;top:6.5px;">Программа «Программирование виртуальной и</div>
<div class="c lnk" style="left:107px;top:29.5px;">дополненной среды»</div>
<div class="c" style="left:507px;top:6.5px">до 10</div>
<div class="c" style="left:627px;top:6.5px">от 12 до 17</div>
<div class="c" style="left:786px;top:6.5px">63</div>
<div class="badge" style="left:959px">Опубликовано</div>
<div class="c" style="left:1106px;top:6.5px">Нет</div>
<div class="c lnk" style="left:1184px;top:6.5px;">Техническая</div>
<div class="c lnk" style="left:1304px;top:6.5px;width:114px;">Программир...</div>
<div class="c lnk" style="left:1424px;top:6.5px;">г. Новосибирск</div>
<div class="c lnk" style="left:1599px;top:6.5px;">Дзержинский</div>
<div class="c" style="left:1774px;top:6.5px">455</div>
</div>
<div class="a" style="left:52px;top:175px;width:1848px;height:78px;background:#f9f9f9;border-bottom:1px solid #ebebeb;overflow:hidden">
<div class="c" style="left:7px;top:6.5px">12888</div>
<div class="c lnk" style="left:107px;top:6.5px;">Программа «3D-моделирование»</div>
<div class="c" style="left:507px;top:6.5px">до 10</div>
<div class="c" style="left:627px;top:6.5px">от 12 до 17</div>
<div class="c" style="left:786px;top:6.5px">56</div>
<div class="badge" style="left:959px">Опубликовано</div>
<div class="c" style="left:1106px;top:6.5px">Нет</div>
<div class="c lnk" style="left:1184px;top:6.5px;">Техническая</div>
<div class="c lnk" style="left:1304px;top:6.5px;">3D</div>
<div class="c lnk" style="left:1304px;top:29.5px;width:114px;">моделирова...</div>
<div class="c lnk" style="left:1304px;top:52.5px;width:114px;">прототипир...</div>
<div class="c lnk" style="left:1424px;top:6.5px;">г. Новосибирск</div>
<div class="c lnk" style="left:1599px;top:6.5px;">Дзержинский</div>
<div class="c" style="left:1774px;top:6.5px">460</div>
</div>
<div class="a" style="left:52px;top:253px;width:1848px;height:78px;background:#fff;border-bottom:1px solid #ebebeb;overflow:hidden">
<div class="c" style="left:7px;top:6.5px">11792</div>
<div class="c lnk" style="left:107px;top:6.5px;">Программа «Анимация»</div>
<div class="c" style="left:507px;top:6.5px">до 12</div>
<div class="c" style="left:627px;top:6.5px">от 10 до 15</div>
<div class="c" style="left:786px;top:6.5px">36</div>
<div class="badge" style="left:959px">Опубликовано</div>
<div class="c" style="left:1106px;top:6.5px">Да</div>
<div class="c lnk" style="left:1184px;top:6.5px;">Техническая</div>
<div class="c lnk" style="left:1304px;top:6.5px;">Мультимедиа</div>
<div class="c lnk" style="left:1304px;top:29.5px;">студии и</div>
<div class="c lnk" style="left:1304px;top:52.5px;">киностудии</div>
<div class="c lnk" style="left:1424px;top:6.5px;">г. Новосибирск</div>
<div class="c lnk" style="left:1599px;top:6.5px;">Дзержинский</div>
<div class="c" style="left:1774px;top:6.5px">890</div>
</div>
<div class="a" style="left:52px;top:331px;width:1848px;height:78px;background:#ededf6;border-bottom:1px solid #ebebeb;overflow:hidden">
<div class="c" style="left:7px;top:6.5px">7653</div>
<div class="c lnk" style="left:107px;top:6.5px;">Программа «Компьютерная анимация»</div>
<div class="c" style="left:507px;top:6.5px">до 10</div>
<div class="c" style="left:627px;top:6.5px">от 12 до 17</div>
<div class="c" style="left:786px;top:6.5px">10</div>
<div class="badge" style="left:959px">Опубликовано</div>
<div class="c" style="left:1106px;top:6.5px">Нет</div>
<div class="c lnk" style="left:1184px;top:6.5px;">Техническая</div>
<div class="c lnk" style="left:1304px;top:6.5px;">Мультимедиа</div>
<div class="c lnk" style="left:1304px;top:29.5px;">студии и</div>
<div class="c lnk" style="left:1304px;top:52.5px;">киностудии</div>
<div class="c lnk" style="left:1424px;top:6.5px;">г. Новосибирск</div>
<div class="c lnk" style="left:1599px;top:6.5px;">Дзержинский</div>
<div class="c" style="left:1774px;top:6.5px">390</div>
</div>
<div class="a" style="left:52px;top:409px;width:1848px;height:77px;background:#fff;border-bottom:1px solid #ebebeb;overflow:hidden">
<div class="c" style="left:7px;top:6.5px">7576</div>
<div class="c lnk" style="left:107px;top:6.5px;">Программа «Основы медиажурналистики. Мастер-</div>
<div class="c lnk" style="left:107px;top:29.5px;">класс»</div>
<div class="c" style="left:507px;top:6.5px">до 10</div>
<div class="c" style="left:627px;top:6.5px">от 13 до 17</div>
<div class="c" style="left:786px;top:6.5px">10</div>
<div class="badge" style="left:959px">Опубликовано</div>
<div class="c" style="left:1106px;top:6.5px">Да</div>
<div class="c lnk" style="left:1184px;top:6.5px;">Техническая</div>
<div class="c lnk" style="left:1304px;top:6.5px;">Мультимедиа</div>
<div class="c lnk" style="left:1304px;top:29.5px;">студии и</div>
<div class="c lnk" style="left:1304px;top:52.5px;">киностудии</div>
<div class="c lnk" style="left:1424px;top:6.5px;">г. Новосибирск</div>
<div class="c lnk" style="left:1599px;top:6.5px;">Дзержинский</div>
<div class="c" style="left:1774px;top:6.5px">960</div>
</div>
<div class="a" style="left:52px;top:486px;width:1848px;height:78px;background:#f9f9f9;border-bottom:1px solid #ebebeb;overflow:hidden">
<div class="c" style="left:7px;top:6.5px">7512</div>
<div class="c lnk" style="left:107px;top:6.5px;">Программа «Виртуальная и дополненная</div>
<div class="c" style="left:507px;top:6.5px">до 10</div>
<div class="c" style="left:627px;top:6.5px">от 12 до 17</div>
<div class="c" style="left:786px;top:6.5px">11</div>
<div class="badge" style="left:959px">Опубликовано</div>
<div class="c" style="left:1106px;top:6.5px">Нет</div>
<div class="c lnk" style="left:1184px;top:6.5px;">Техническая</div>
<div class="c lnk" style="left:1304px;top:6.5px;width:114px;">Информаци...</div>
<div class="c lnk" style="left:1424px;top:6.5px;">г. Новосибирск</div>
<div class="c lnk" style="left:1599px;top:6.5px;">Дзержинский</div>
<div class="c" style="left:1774px;top:6.5px">615</div>
</div>
</div>
<div class="a" style="left:1900px;top:386px;width:18px;height:513px;background:#f1f1f1"></div>
<div class="a" style="left:1900px;top:404px;width:18px;height:287px;background:#cacaca"></div>
<svg class="a" style="left:1904px;top:390px" width="10" height="8" viewBox="0 0 10 8"><path d="M1.5 6.5 L5 2.2 L8.5 6.5" fill="none" stroke="#adadad" stroke-width="2.2"/></svg>
<svg class="a" style="left:1904px;top:886px" width="10" height="8" viewBox="0 0 10 8"><path d="M1.5 1.5 L5 5.8 L8.5 1.5" fill="none" stroke="#555" stroke-width="2.2"/></svg>
<div class="a" style="left:52px;top:899px;width:1866px;height:1px;background:#e6e6e6"></div>

<!-- pager -->
<div class="a" style="left:189px;top:927px;font-size:17px;color:#444;white-space:nowrap">Страница</div>
<div class="a" style="left:284px;top:916px;width:62px;height:40px;border:1px solid #e4e4e4;border-radius:4px;background:#fff"></div>
<div class="a" style="left:297px;top:927px;font-size:17px;color:#333">1</div>
<div class="a" style="left:354px;top:927px;font-size:17px;color:#444;white-space:nowrap">из 1</div>
<div class="a" style="left:173px;top:927px;width:1px;height:18px;background:#e3e3e3"></div>
<svg class="a" style="left:84px;top:929px" width="17" height="15" viewBox="0 0 17 15"><path d="M8 1L2 7.5L8 14M15 1L9 7.5L15 14" fill="none" stroke="#c8c8c8" stroke-width="2"/></svg>
<svg class="a" style="left:138px;top:929px" width="10" height="15" viewBox="0 0 10 15"><path d="M8.5 1L2 7.5L8.5 14" fill="none" stroke="#c8c8c8" stroke-width="2"/></svg>
<svg class="a" style="left:427px;top:929px" width="10" height="15" viewBox="0 0 10 15"><path d="M1.5 1L8 7.5L1.5 14" fill="none" stroke="#c8c8c8" stroke-width="2"/></svg>
<svg class="a" style="left:474px;top:929px" width="17" height="15" viewBox="0 0 17 15"><path d="M2 1L8 7.5L2 14M9 1L15 7.5L9 14" fill="none" stroke="#c8c8c8" stroke-width="2"/></svg>
<svg class="a" style="left:533px;top:925px" width="22" height="21" viewBox="0 0 22 21"><path d="M3.5 9A7.5 7.5 0 0 1 17.5 6.5" fill="none" stroke="#9a9a9a" stroke-width="2.6"/><path d="M21 1.5V9H13.5Z" fill="#9a9a9a"/><path d="M18.5 12A7.5 7.5 0 0 1 4.5 14.5" fill="none" stroke="#9a9a9a" stroke-width="2.6"/><path d="M1 19.5V12H8.5Z" fill="#9a9a9a"/></svg>
<div class="a" style="left:402px;top:927px;width:1px;height:18px;background:#e3e3e3"></div>
<div class="a" style="left:513px;top:927px;width:1px;height:18px;background:#e3e3e3"></div>
<div class="a" style="left:1478px;top:927px;font-size:17px;color:#444;white-space:nowrap">Отображаются записи с 1 по 11, всего 11</div>
<div class="a" style="left:1827px;top:917px;width:81px;height:39px;border:1px solid #e4e4e4;border-radius:4px;background:#fff"></div>
<div class="a" style="left:1840px;top:927px;font-size:17px;color:#333">25</div>
<svg class="a" style="left:1887px;top:931px" width="14" height="10" viewBox="0 0 14 10"><path d="M1.5 1.5H12.5L7 8.5Z" fill="none" stroke="#999" stroke-width="2" stroke-linejoin="round"/></svg>

<!-- bottom window button -->
<div class="a" style="left:84px;top:982px;width:175px;height:40px;background:#e6e6e6;border:1px solid #d2d2d2;border-radius:3px"></div>
<div class="a" style="left:138px;top:994px;font-size:16px;font-weight:bold;color:#444;white-space:nowrap;letter-spacing:-0.3px">Программы</div>
<svg class="a" style="left:109px;top:991px" width="18" height="21" viewBox="0 0 18 21"><rect x="5" y="0" width="2.2" height="4" rx="0.8" fill="#a0a0a0"/><rect x="11" y="0" width="2.2" height="4" rx="0.8" fill="#a0a0a0"/><rect x="0" y="2.5" width="18" height="18" rx="1.6" fill="#a0a0a0"/><rect x="0" y="6.8" width="18" height="0.9" fill="#e6e6e6"/><rect x="3.6" y="10" width="2.2" height="2" fill="#e6e6e6"/><rect x="8" y="10" width="2.2" height="2" fill="#e6e6e6"/><rect x="12.4" y="10" width="2.2" height="2" fill="#e6e6e6"/><rect x="3.6" y="15" width="2.2" height="2" fill="#e6e6e6"/><rect x="8" y="15" width="2.2" height="2" fill="#e6e6e6"/><rect x="12.4" y="15" width="2.2" height="2" fill="#e6e6e6"/></svg>

<!-- taskbar -->
<div class="a" style="left:0;top:1030px;width:1920px;height:50px;background:linear-gradient(90deg,#eadcd4 0px,#e9e0dc 63px,#e7e3e5 130px,#e6e6ec 380px,#e3e9f2 660px,#eaebef 900px,#ebebee 1400px,#dcebf1 1570px,#d3e9ee 1920px)"></div>
<div class="a" style="left:64px;top:1030px;width:61px;height:50px;background:#f3efee"></div>
<div class="a" style="left:64px;top:1077px;width:61px;height:3px;background:#0b6fc7"></div>
<div class="a" style="left:255px;top:1077px;width:51px;height:3px;background:#0b6fc7"></div>
<div class="a" style="left:317px;top:1077px;width:51px;height:3px;background:#0b6fc7"></div>
<svg class="a" style="left:20px;top:1044px" width="21" height="22" viewBox="0 0 21 22"><path d="M0 3.2L9 2V10.3H0Z M10 1.8L21 0.3V10.3H10Z M0 11.4H9V19.8L0 18.6Z M10 11.4H21V21.6L10 20.1Z" fill="#000"/></svg>
<svg class="a" style="left:79px;top:1041px" width="30" height="28" viewBox="0 0 30 28"><defs><linearGradient id="og2" x1="0" y1="0" x2="1" y2="0"><stop offset="0" stop-color="#ff1b2d"/><stop offset="0.55" stop-color="#e8101f"/><stop offset="1" stop-color="#a70014"/></linearGradient></defs><ellipse cx="14.6" cy="14" rx="14.3" ry="13.8" fill="url(#og2)"/><ellipse cx="14.7" cy="14" rx="7.3" ry="10" fill="#f3efee"/></svg>
<svg class="a" style="left:140px;top:1041px" width="32" height="28" viewBox="0 0 32 28"><path d="M1 9L15.5 1L30 9V27H1Z" fill="#0a64b6"/><path d="M4 8H27V17L15.5 22L4 17Z" fill="#f4f6f8"/><path d="M1 10L15.5 19L30 10V27H1Z" fill="#2aa3ec"/><path d="M1 27L12 16L15.5 19L19 16L30 27Z" fill="#1e8fdc"/></svg>
<div class="a" style="left:159px;top:1054px;width:25px;height:21px;border-radius:11px;background:#c9cdd2;border:1px solid #5a5a5a"></div>
<div class="a" style="left:159px;top:1055px;width:25px;font-size:15px;color:#111;text-align:center;line-height:20px;letter-spacing:-0.5px">78</div>
<svg class="a" style="left:203px;top:1040px" width="31" height="30" viewBox="0 0 31 30"><defs><linearGradient id="eg1" x1="0" y1="0.2" x2="1" y2="0.6"><stop offset="0" stop-color="#1d8ee0"/><stop offset="0.5" stop-color="#27b6dc"/><stop offset="1" stop-color="#62d95c"/></linearGradient><linearGradient id="eg2" x1="0" y1="0" x2="0.5" y2="1"><stop offset="0" stop-color="#1577cf"/><stop offset="1" stop-color="#0c4c98"/></linearGradient></defs><circle cx="15.5" cy="15" r="14.6" fill="url(#eg1)"/><path d="M14.5 18C14.5 14.5 17.5 12.5 21 12.5C25 12.5 29 14 31 16.5V22C29 20 25.5 19.5 22.5 20C18.5 20.5 14.5 20.5 14.5 18Z" fill="#e6e3e6"/><path d="M0.9 15.5C0.9 21 4 26 9 28.5C12 30 16 30 20 29C25 27.5 28 24.5 29.3 21.5C27 23.2 24 24.5 20 24C15.5 23.5 12 20.5 12 16.5C12 12.5 15 10 18.5 10C14 7.5 7.5 7.5 3.5 11C2 12.3 0.9 14 0.9 15.5Z" fill="url(#eg2)"/></svg>
<svg class="a" style="left:266px;top:1043px" width="28" height="23" viewBox="0 0 28 23"><path d="M0 2C0 1 1 0 2 0H9L11 2H26C27 2 28 3 28 4V7H0Z" fill="#e7a70f"/><path d="M0 5H28V21C28 22 27 23 26 23H2C1 23 0 22 0 21Z" fill="#fcd462"/><path d="M7 12H21V23H17.5V16H10.5V23H7Z" fill="#2a8ad6"/></svg>
<svg class="a" style="left:328px;top:1041px" width="28" height="28" viewBox="0 0 28 28"><path d="M11 4H26C27 4 28 5 28 6V22C28 23 27 24 26 24H11Z" fill="#fff" stroke="#2b579a" stroke-width="1.2"/><path d="M15 8H25M15 11.5H25M15 15H25M15 18.5H25" stroke="#2b579a" stroke-width="1.4"/><path d="M0 3.5L17 0.5V27.5L0 24.5Z" fill="#2b579a"/><path d="M3 9H5L6.3 16L7.8 9H9.6L11 16L12.3 9H14.3L12 19H10L8.7 12.8L7.4 19H5.3Z" fill="#fff"/></svg>
<!-- tray -->
<svg class="a" style="left:1608px;top:1049px" width="18" height="11" viewBox="0 0 18 11"><path d="M1 10L9 2L17 10" fill="none" stroke="#111" stroke-width="1.3"/></svg>
<svg class="a" style="left:1640px;top:1047px" width="17" height="16" viewBox="0 0 17 16"><path d="M1 14.5A13.5 13.5 0 0 1 14.5 1M4 14.5A10.5 10.5 0 0 1 14.5 4M7 14.5A7.5 7.5 0 0 1 14.5 7M10 14.5A4.5 4.5 0 0 1 14.5 10" fill="none" stroke="#111" stroke-width="1.1"/><circle cx="14.5" cy="14" r="1.6" fill="#111"/></svg>
<svg class="a" style="left:1667px;top:1046px" width="22" height="18" viewBox="0 0 22 18"><path d="M1 6H4.5L9 1.5V16.5L4.5 12H1Z" fill="none" stroke="#111" stroke-width="1.2" stroke-linejoin="round"/><path d="M12 6.5A3 3 0 0 1 12 11.5M14.5 4A6.5 6.5 0 0 1 14.5 14" fill="none" stroke="#111" stroke-width="1.2"/><path d="M17.5 1.5A10.5 10.5 0 0 1 17.5 16.5" fill="none" stroke="#999" stroke-width="1.1"/></svg>
<svg class="a" style="left:1698px;top:1049px" width="21" height="12" viewBox="0 0 21 12"><rect x="0.7" y="0.7" width="17.6" height="10.6" fill="none" stroke="#111" stroke-width="1.3"/><rect x="2.5" y="2.5" width="4" height="7" fill="#111"/><rect x="18.5" y="3.5" width="2" height="5" fill="#111"/></svg>
<div class="a" style="left:1732px;top:1048px;font-size:14px;color:#111;white-space:nowrap;letter-spacing:0.2px">ENG</div>
<div class="a" style="left:1794px;top:1036px;font-size:14px;color:#111;white-space:nowrap;letter-spacing:-0.4px">16:35</div>
<div class="a" style="left:1776px;top:1058px;font-size:14px;color:#111;white-space:nowrap">05.12.2021</div>
<svg class="a" style="left:1869px;top:1044px" width="21" height="22" viewBox="0 0 21 22"><path d="M0 0H21V17H12.5L10.5 19.5L8.5 17H0Z" fill="#000"/><path d="M4 5H17M4 8.5H17M4 12H13" stroke="#fff" stroke-width="1.2"/></svg>
<div class="a" style="left:1914px;top:1033px;width:1px;height:47px;background:#aab8bf"></div>
</div></body></html>
